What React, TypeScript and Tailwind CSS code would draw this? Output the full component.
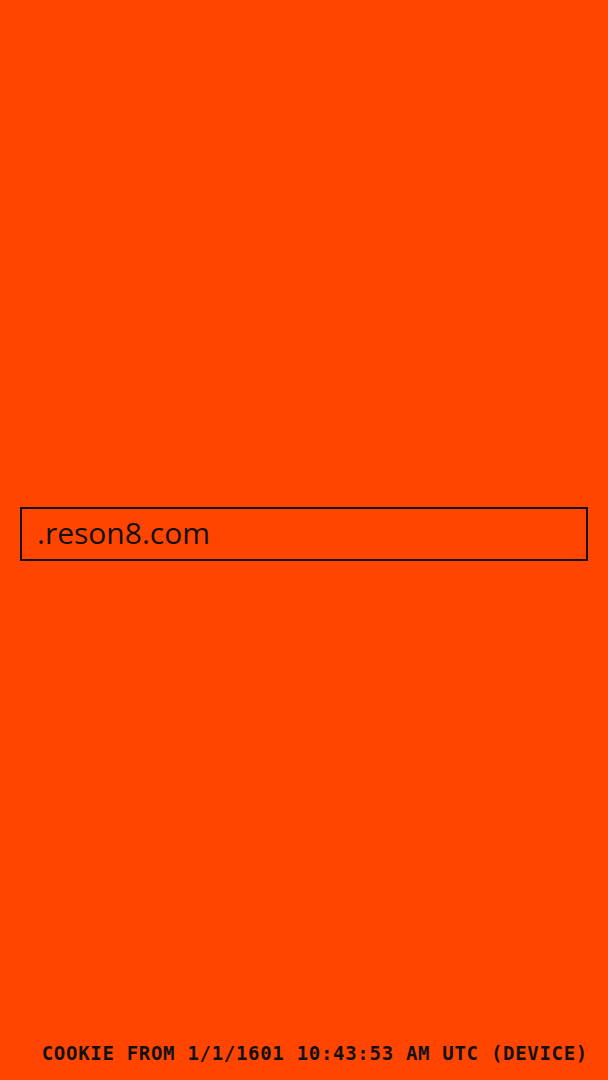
export default function App() {
  return (
    <div className="h-[1080px] w-full bg-[#ff4500] flex flex-col">
      <div className="pt-[507px] px-5">
        <div className="h-[54px] border-2 border-[#111] flex items-center pl-[15px] pb-[2px]">
          <span className="text-[30px] text-[#111] leading-none" style={{ fontFamily: '"Open Sans", sans-serif' }}>.reson8.com</span>
        </div>
      </div>
      <div className="mt-auto pb-[17px] pr-[20px] flex justify-end">
        <span className="text-[19px] font-bold text-[#111] tracking-[0.7px] uppercase leading-none whitespace-nowrap" style={{ fontFamily: '"DejaVu Sans Mono", monospace' }}>
          Cookie from 1/1/1601 10:43:53 AM UTC (Device)
        </span>
      </div>
    </div>
  );
}
